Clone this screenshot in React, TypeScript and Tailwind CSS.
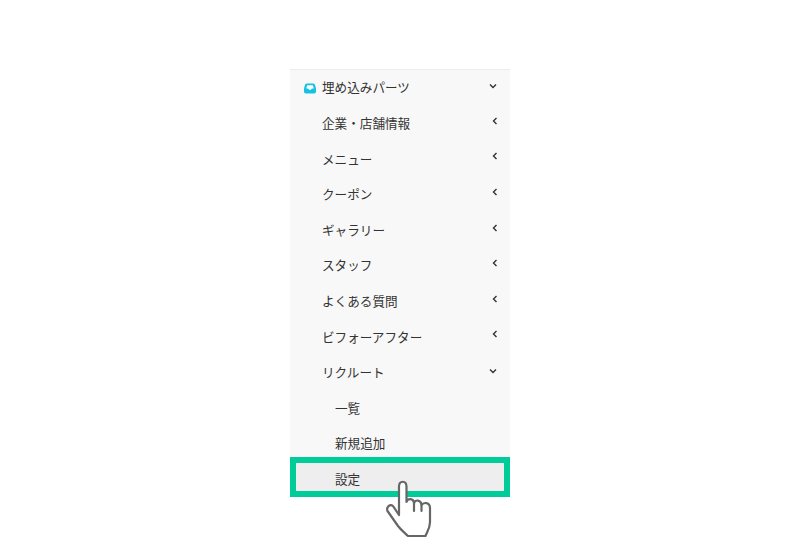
const parents = [
  { label: '企業・店舗情報' },
  { label: 'メニュー' },
  { label: 'クーポン' },
  { label: 'ギャラリー' },
  { label: 'スタッフ' },
  { label: 'よくある質問' },
  { label: 'ビフォーアフター' },
];

const Chevron = ({ down }: { down?: boolean }) => (
  <svg width="8" height="8" viewBox="0 0 8 8" fill="none" stroke="#333" strokeWidth="1.4">
    {down ? <path d="M1 2.5 4 5.5 7 2.5" /> : <path d="M5.5 1 2.5 4 5.5 7" />}
  </svg>
);

const Row = ({ label, down }: { label: string; down?: boolean }) => (
  <div className={down ? 'flex h-[35.6px] items-center pl-[32px] pr-[13px] pt-[2px]' : 'flex h-[35.6px] items-center pl-[32px] pr-[11px] pt-[2px]'}>
    <span>{label}</span>
    <span className={down ? 'ml-auto -mt-[5px]' : 'ml-auto -mt-[7px]'}>
      <Chevron down={down} />
    </span>
  </div>
);

const HandCursor = () => (
  <svg
    className="absolute left-[380px] top-[475px]"
    width="60"
    height="65"
    viewBox="0 0 60 65"
    fill="#fff"
    stroke="#666"
    strokeWidth="2.2"
    strokeLinejoin="round"
    strokeLinecap="round"
  >
    <path d="M19 40V12C19 5 26.5 5 26.5 12V27C27.5 23 33.5 23 34 28C35.5 24 41 25 41.5 30C43.5 27 50 27 50 33V47C50 53 47.5 56 45.5 61H28C25 58 21 55 18 51L7.5 36C6 32 10 28.5 13 31Z" />
    <path d="M34 28V36M41.5 30V36" />
  </svg>
);

export default function App() {
  return (
    <div className="relative h-[550px] w-[800px] overflow-hidden bg-white pt-[69px] font-['Liberation_Sans','Noto_Sans_CJK_JP',sans-serif] text-[12.6px] text-[#333]">
      <div className="ml-[290px] h-[428px] w-[220px] border-t border-[#ececec] bg-[#f8f8f8]">
        <div className="flex h-[35.6px] items-center pl-[14px] pr-[13px] pt-[2px]">
          <svg width="12" height="11" viewBox="0 0 12 11" className="mr-[6px]">
            <path d="M3 0.5H9C10 0.5 10.6 1 11 2L12 5.5V8.5C12 9.8 11.2 10.5 10 10.5H2C0.8 10.5 0 9.8 0 8.5V5.5L1 2C1.4 1 2 0.5 3 0.5Z" fill="#16c2e2" />
            <path d="M3.2 2.2H8.8L9.8 5.6H7.8L7 6.8H5L4.2 5.6H2.2Z" fill="#fff" />
          </svg>
          <span>埋め込みパーツ</span>
          <span className="ml-auto -mt-[5px]">
            <Chevron down />
          </span>
        </div>
        {parents.map((item) => (
          <Row key={item.label} label={item.label} />
        ))}
        <Row label="リクルート" down />
        <div className="flex h-[35.6px] items-center pl-[45px] pt-[2px]">一覧</div>
        <div className="flex h-[35.6px] items-center pl-[45px] pt-[2px]">新規追加</div>
        <div className="-mt-[4.6px] flex h-[40px] items-center border-[6px] border-[#00cc99] bg-[#eeeeee] pl-[39px] pt-[8px]">
          設定
        </div>
      </div>
      <HandCursor />
    </div>
  );
}
